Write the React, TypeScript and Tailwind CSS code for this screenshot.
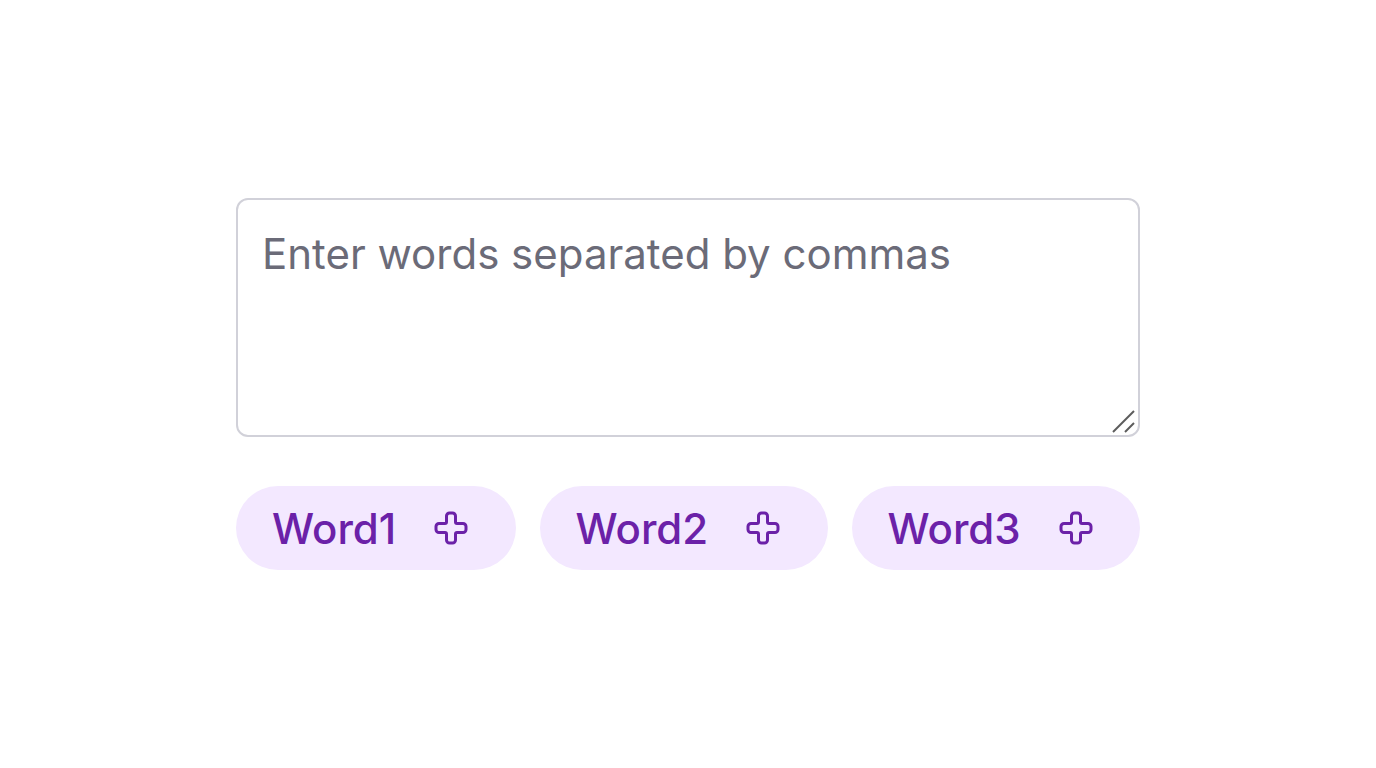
import React from "react";

const words = ["Word1", "Word2", "Word3"];

const CrossIcon: React.FC = () => (
    <svg width="36" height="36" viewBox="0 0 24 24" fill="none" stroke="currentColor" strokeWidth="2" strokeLinecap="round" strokeLinejoin="round">
        <path d="M4 9a2 2 0 0 0-2 2v2a2 2 0 0 0 2 2h4a1 1 0 0 1 1 1v4a2 2 0 0 0 2 2h2a2 2 0 0 0 2-2v-4a1 1 0 0 1 1-1h4a2 2 0 0 0 2-2v-2a2 2 0 0 0-2-2h-4a1 1 0 0 1-1-1V4a2 2 0 0 0-2-2h-2a2 2 0 0 0-2 2v4a1 1 0 0 1-1 1z" />
    </svg>
);

const App: React.FC = () => {
    return (
        <main className="min-h-screen w-full bg-white flex items-center justify-center font-['Inter',sans-serif]">
            <div className="w-[904px] flex flex-col gap-[49px]">
                <div className="relative">
                    <textarea
                        className="block w-full h-[239px] resize-none border-2 border-[#d1d1d9] rounded-xl px-6 pt-7 text-[42px] leading-[51px] text-gray-900 placeholder:text-[#6b6b78] outline-none"
                        placeholder="Enter words separated by commas"
                    />
                    {/* resize grip */}
                    <svg className="absolute right-[3px] bottom-[3px] pointer-events-none" width="26" height="26" viewBox="0 0 26 26">
                        <line x1="2" y1="24" x2="23" y2="3" stroke="#5c5c5c" strokeWidth="2" />
                        <line x1="14" y1="24" x2="23" y2="15" stroke="#5c5c5c" strokeWidth="2" />
                    </svg>
                </div>

                <div className="flex gap-6">
                    {words.map((word) => (
                        <button
                            key={word}
                            className="grow flex items-center gap-[37px] h-[84px] px-9 rounded-full bg-[#f3e8ff] text-[#6b21a8] text-[42px] font-medium"
                        >
                            <span>{word}</span>
                            <CrossIcon />
                        </button>
                    ))}
                </div>
            </div>
        </main>
    );
};

export default App;
